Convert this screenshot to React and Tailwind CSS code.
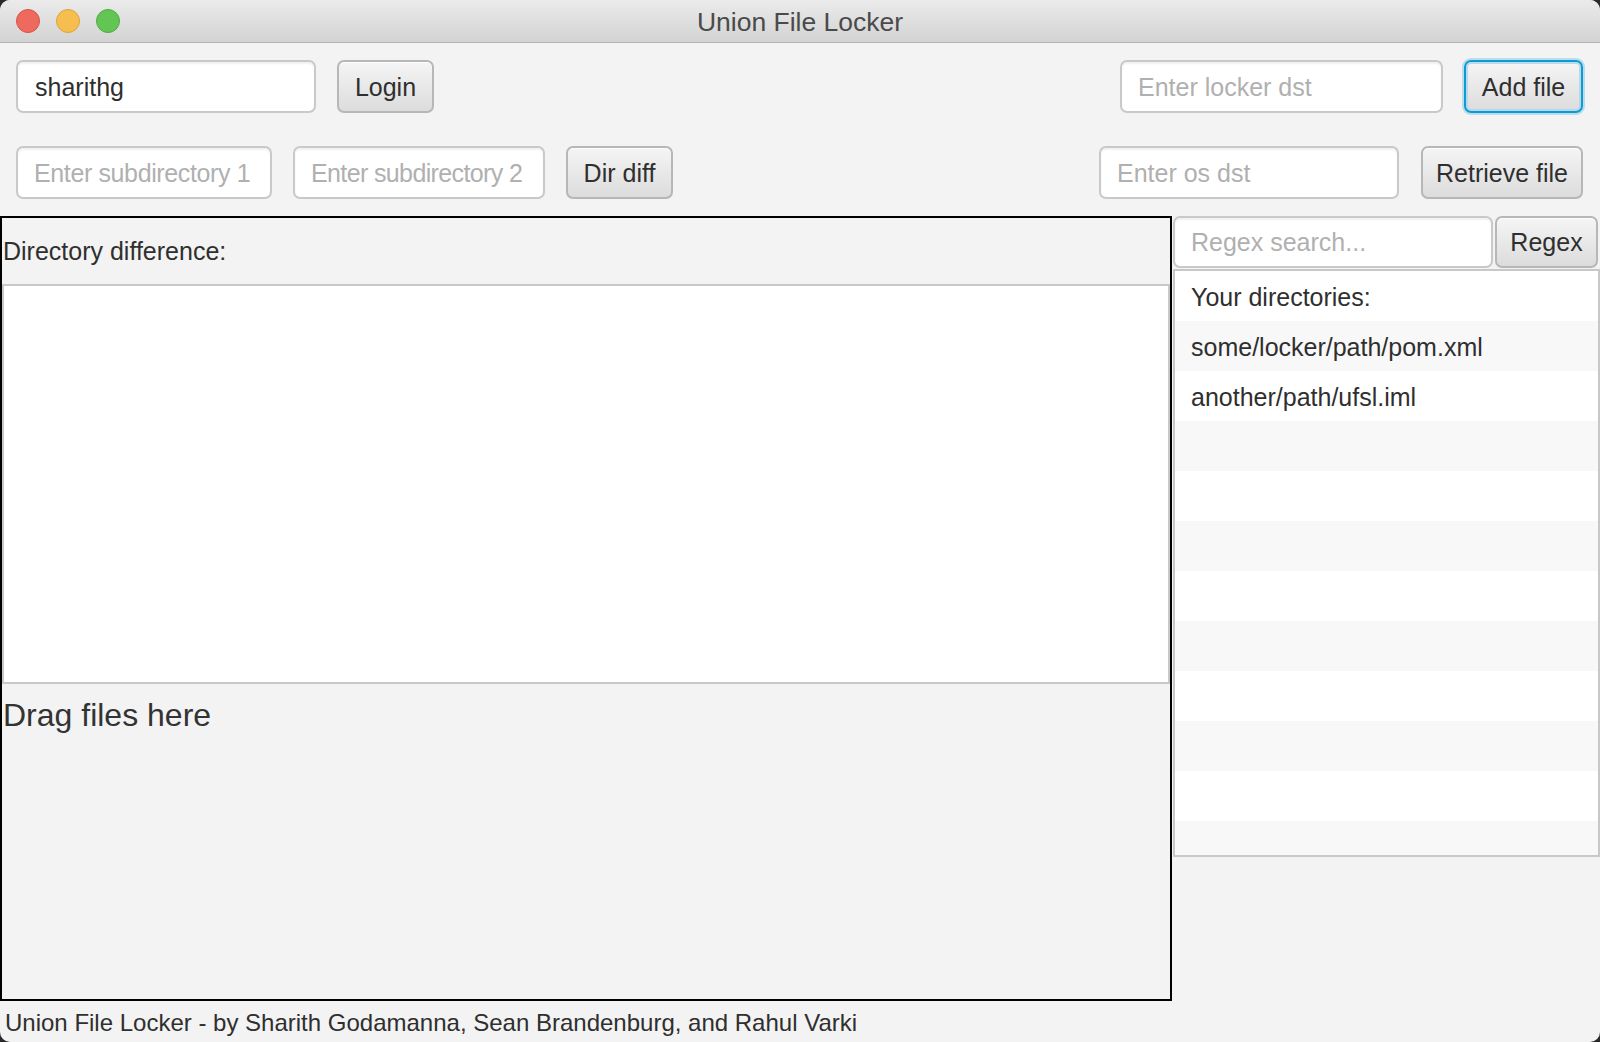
const font = "font-['Liberation_Sans','Helvetica',Arial,sans-serif]";

const TextField = ({ value, placeholder, className = "", textClass = "" }) => (
  <div
    className={`flex items-center h-full pt-[2px] bg-white border-2 border-[#c9c9c9] rounded-[7px] px-[16px] shadow-[inset_0_2px_2px_rgba(0,0,0,0.06)] text-[25px] whitespace-nowrap overflow-hidden ${className}`}
  >
    {value ? (
      <span className={`text-[#2f2f2f] ${textClass}`}>{value}</span>
    ) : (
      <span className={`text-[#b0b0b0] ${textClass}`}>{placeholder}</span>
    )}
  </div>
);

const Button = ({ label, focused, className = "" }) => (
  <div
    className={`flex items-center justify-center h-full pt-[2px] rounded-[7px] bg-gradient-to-b from-[#f5f5f5] to-[#dcdcdc] text-[25px] whitespace-nowrap text-[#2f2f2f] ${
      focused
        ? "border-2 border-[#0b9bd5] shadow-[0_0_0_2px_rgba(11,155,213,0.25),inset_0_0_0_2px_rgba(180,215,235,0.9)]"
        : "border-2 border-[#b7b7b7] shadow-[inset_0_1px_0_rgba(255,255,255,0.8)]"
    } ${className}`}
  >
    {label}
  </div>
);

const dirRows = [
  "Your directories:",
  "some/locker/path/pom.xml",
  "another/path/ufsl.iml",
  "",
  "",
  "",
  "",
  "",
  "",
  "",
  "",
  "",
];

export default function App() {
  return (
    <div className="w-[1600px] h-[1042px] bg-[#2a2a2a]">
      <div className={`h-full rounded-[10px] overflow-hidden bg-[#f3f3f3] flex flex-col ${font}`}>
        {/* title bar */}
        <div className="h-[43px] shrink-0 grid grid-cols-[1fr_auto_1fr] items-center border-b border-[#b2b2b2] bg-gradient-to-b from-[#ebebeb] to-[#d3d3d3]">
          <div className="flex items-center gap-[16px] pl-[16px]">
            <span className="w-[24px] h-[24px] rounded-full bg-[#ee6a5e] border border-[#d65447]" />
            <span className="w-[24px] h-[24px] rounded-full bg-[#f6be4f] border border-[#dea33a]" />
            <span className="w-[24px] h-[24px] rounded-full bg-[#62c554] border border-[#4eac40]" />
          </div>
          <div className="pt-[3px] text-[26.5px] text-[#4a4a4a]">Union File Locker</div>
          <div />
        </div>

        {/* toolbar */}
        <div className="pl-[16px] pr-[17px] pt-[17px] shrink-0">
          <div className="flex items-center h-[53px]">
            <TextField value="sharithg" className="w-[300px] pl-[17px]" />
            <Button label="Login" className="w-[97px] ml-[21px]" />
            <div className="flex-1" />
            <TextField placeholder="Enter locker dst" className="w-[323px]" />
            <Button label="Add file" focused className="w-[119px] ml-[21px]" />
          </div>
          <div className="flex items-center h-[53px] mt-[33px]">
            <TextField
              placeholder="Enter subdirectory 1"
              className="w-[256px]"
              textClass="tracking-[-0.015em]"
            />
            <TextField
              placeholder="Enter subdirectory 2"
              className="w-[252px] ml-[21px]"
              textClass="tracking-[-0.025em]"
            />
            <Button label="Dir diff" className="w-[107px] ml-[21px]" />
            <div className="flex-1" />
            <TextField placeholder="Enter os dst" className="w-[300px]" />
            <Button label="Retrieve file" className="w-[162px] ml-[22px]" />
          </div>
        </div>

        {/* main area */}
        <div className="flex h-[785px] mt-[17px] shrink-0">
          <div className="w-[1172px] border-2 border-black flex flex-col">
            <div className="h-[66px] flex items-center pt-[2px] pl-[1px] text-[25px] text-[#2f2f2f]">
              Directory difference:
            </div>
            <div className="h-[400px] bg-white border-2 border-[#c8c8c8]" />
            <div className="flex-1 pt-[7px] pl-[1px] text-[32px] text-[#333]">Drag files here</div>
          </div>

          <div className="w-[427px] ml-px flex flex-col">
            <div className="h-[52px] flex gap-[2px]">
              <TextField placeholder="Regex search..." className="w-[320px]" />
              <Button label="Regex" className="w-[103px]" />
            </div>
            <div className="h-[588px] mt-px border-2 border-[#c8c8c8] bg-white flex flex-col overflow-hidden">
              {dirRows.map((row, i) => (
                <div
                  key={i}
                  className={`h-[50px] shrink-0 flex items-center pt-[3px] pl-[16px] text-[25px] text-[#2f2f2f] ${
                    i % 2 === 1 ? "bg-[#f8f8f8]" : "bg-white"
                  }`}
                >
                  {row}
                </div>
              ))}
            </div>
          </div>
        </div>

        {/* footer */}
        <div className="flex-1 flex items-center pt-[2px] pl-[5px] text-[24px] text-[#2f2f2f]">
          Union File Locker - by Sharith Godamanna, Sean Brandenburg, and Rahul Varki
        </div>
      </div>
    </div>
  );
}
